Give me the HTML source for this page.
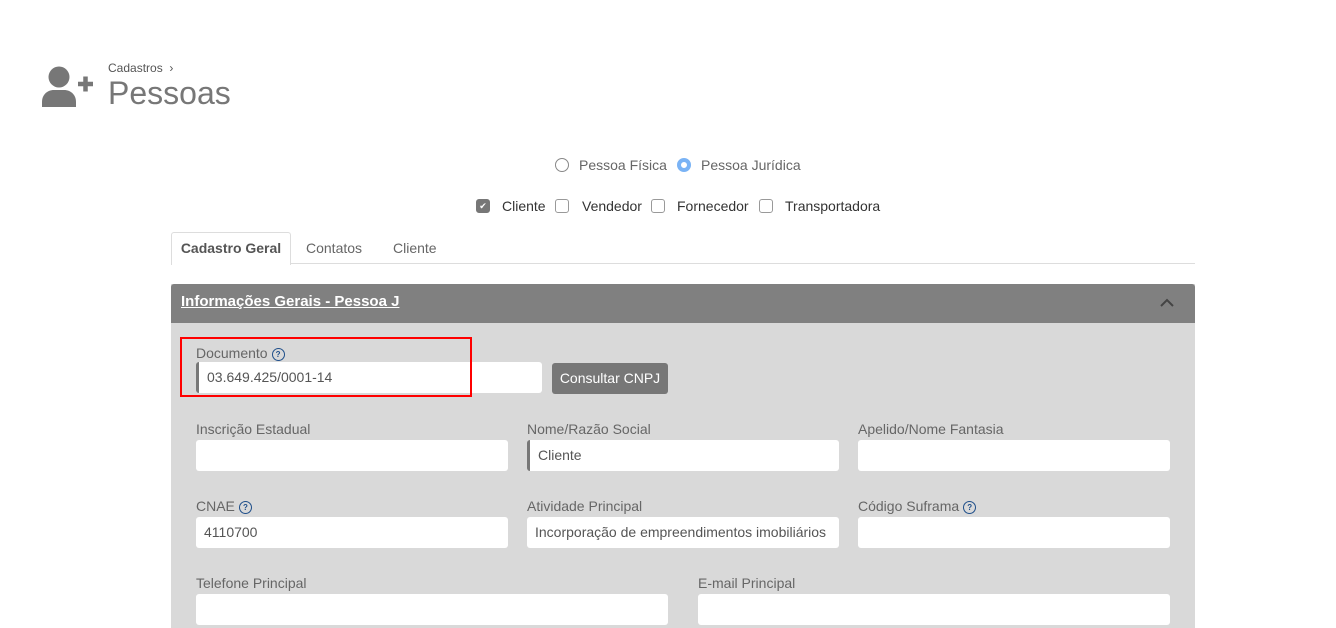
<!DOCTYPE html><html><head><style>
body{margin:0;width:1336px;height:628px;overflow:hidden;background:#fff;font-family:"Liberation Sans",Arial,sans-serif;position:relative}
.a{position:absolute}
.lbl{position:absolute;font-size:14px;color:#666}
.in{position:absolute;background:#fff;border-radius:3px;height:31px;box-sizing:border-box;font-size:14px;color:#555;padding:8px 8px;line-height:15px}
.bar{border-left:3px solid #777}
.q{display:inline-block;width:11px;height:11px;border:1.3px solid #1f4f8a;border-radius:50%;font-size:8px;line-height:11px;text-align:center;color:#1f4f8a;font-weight:bold;vertical-align:1px;margin-left:4px}
.cb{position:absolute;width:12px;height:12px;border:1px solid #999;border-radius:3px;background:#fff}
.t{position:absolute;font-size:14px;color:#333}
</style></head><body>
<svg class="a" style="left:42px;top:66px" width="52" height="42" viewBox="0 0 52 42"><circle cx="17" cy="11" r="10.5" fill="#777"/><path d="M0 41v-5c0-7 5-12 12-12h10c7 0 12 5 12 12v5z" fill="#777"/><path d="M36 18h15M43.5 10.5v15" stroke="#777" stroke-width="4.5"/></svg>
<div class="a" style="left:108px;top:61px;font-size:12px;color:#555">Cadastros &nbsp;›</div>
<div class="a" style="left:108px;top:75px;font-size:32px;color:#777">Pessoas</div>
<div class="a" style="left:555px;top:158px;width:12px;height:12px;border:1px solid #888;border-radius:50%"></div>
<div class="t" style="left:579px;top:157px;color:#666">Pessoa Física</div>
<div class="a" style="left:677px;top:158px;width:6px;height:6px;border:4px solid #7ab3f5;border-radius:50%;background:#fff"></div>
<div class="t" style="left:701px;top:157px;color:#666">Pessoa Jurídica</div>
<div class="cb" style="left:476px;top:199px;background:#777;border-color:#777;color:#fff;font-size:9px;line-height:12px;text-align:center">✔</div>
<div class="t" style="left:502px;top:198px">Cliente</div>
<div class="cb" style="left:555px;top:199px"></div>
<div class="t" style="left:582px;top:198px">Vendedor</div>
<div class="cb" style="left:651px;top:199px"></div>
<div class="t" style="left:677px;top:198px">Fornecedor</div>
<div class="cb" style="left:759px;top:199px"></div>
<div class="t" style="left:785px;top:198px">Transportadora</div>
<div class="a" style="left:171px;top:263px;width:1024px;height:1px;background:#ddd"></div>
<div class="a" style="left:171px;top:232px;width:118px;height:32px;border:1px solid #ddd;border-bottom:none;border-radius:3px 3px 0 0;background:#fff;font-size:14px;color:#555;font-weight:bold;text-align:center;line-height:30px">Cadastro Geral</div>
<div class="t" style="left:306px;top:240px;color:#666">Contatos</div>
<div class="t" style="left:393px;top:240px;color:#666">Cliente</div>
<div class="a" style="left:171px;top:284px;width:1024px;height:344px;background:#d9d9d9"></div>
<div class="a" style="left:171px;top:284px;width:1024px;height:39px;background:#808080;border-radius:3px 3px 0 0"></div>
<div class="a" style="left:181px;top:293px;font-size:15px;font-weight:bold;color:#fff;text-decoration:underline">Informações Gerais - Pessoa J</div>
<svg class="a" style="left:1160px;top:298px" width="14" height="10"><path d="M1 8l6-6 6 6" stroke="#444" stroke-width="2" fill="none"/></svg>
<div class="lbl" style="left:196px;top:345px">Documento<span class="q">?</span></div>
<div class="in bar" style="left:196px;top:362px;width:346px">03.649.425/0001-14</div>
<div class="a" style="left:552px;top:363px;width:116px;height:31px;background:#777;border-radius:3px;color:#fff;font-size:14px;text-align:center;line-height:31px">Consultar CNPJ</div>
<div class="a" style="left:180px;top:337px;width:288px;height:56px;border:2px solid #f00"></div>
<div class="lbl" style="left:196px;top:421px">Inscrição Estadual</div>
<div class="lbl" style="left:527px;top:421px">Nome/Razão Social</div>
<div class="lbl" style="left:858px;top:421px">Apelido/Nome Fantasia</div>
<div class="in" style="left:196px;top:440px;width:312px"></div>
<div class="in bar" style="left:527px;top:440px;width:312px">Cliente</div>
<div class="in" style="left:858px;top:440px;width:312px"></div>
<div class="lbl" style="left:196px;top:498px">CNAE<span class="q">?</span></div>
<div class="lbl" style="left:527px;top:498px">Atividade Principal</div>
<div class="lbl" style="left:858px;top:498px">Código Suframa<span class="q">?</span></div>
<div class="in" style="left:196px;top:517px;width:312px">4110700</div>
<div class="in" style="left:527px;top:517px;width:312px;white-space:nowrap;overflow:hidden">Incorporação de empreendimentos imobiliários</div>
<div class="in" style="left:858px;top:517px;width:312px"></div>
<div class="lbl" style="left:196px;top:575px">Telefone Principal</div>
<div class="lbl" style="left:698px;top:575px">E-mail Principal</div>
<div class="in" style="left:196px;top:594px;width:472px"></div>
<div class="in" style="left:698px;top:594px;width:472px"></div>
</body></html>
